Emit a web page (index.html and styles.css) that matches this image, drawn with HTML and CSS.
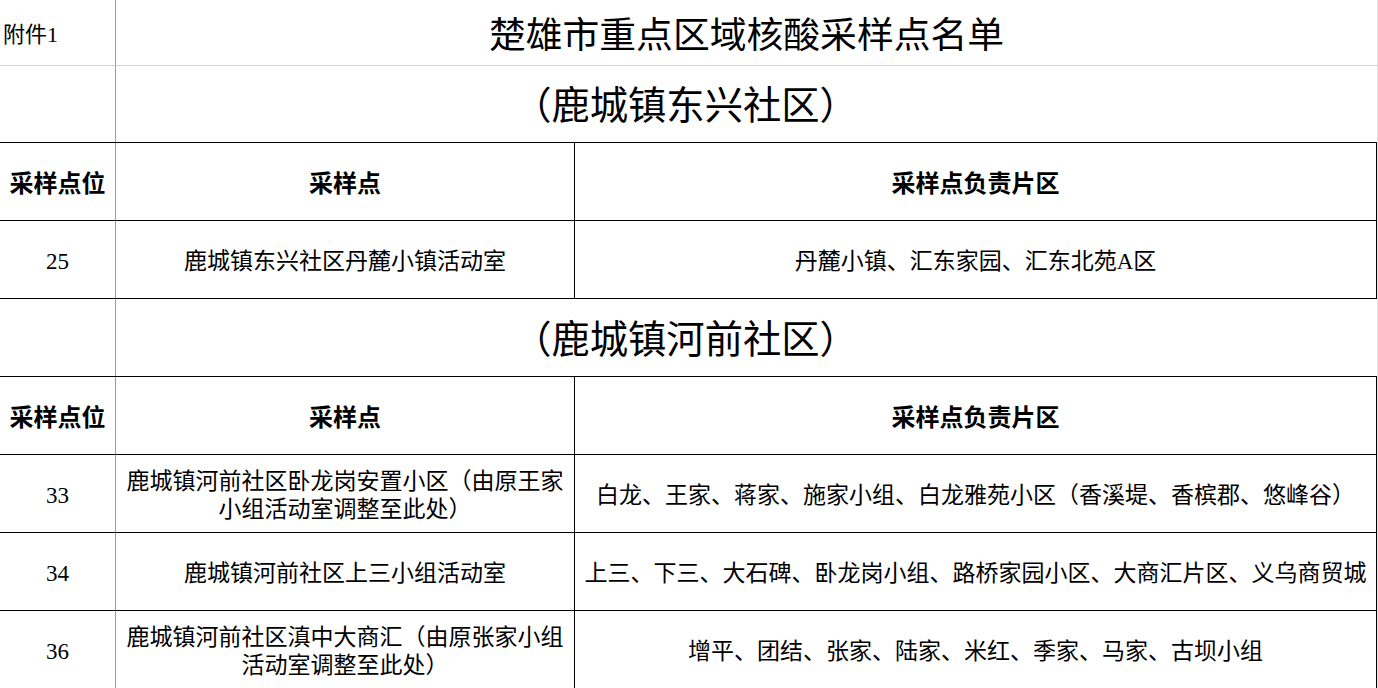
FILE: index.html
```html
<!DOCTYPE html>
<html lang="zh-CN">
<head>
<meta charset="utf-8">
<title>楚雄市重点区域核酸采样点名单</title>
<link rel="stylesheet" href="styles.css">
</head>
<body>
<div class="sheet">
  <div class="cell note">附件1</div>
  <div class="cell title">楚雄市重点区域核酸采样点名单</div>

  <div class="cell sub">（鹿城镇东兴社区）</div>

  <div class="cell c1 head">采样点位</div>
  <div class="cell c2 head">采样点</div>
  <div class="cell c3 head">采样点负责片区</div>

  <div class="cell c1 num">25</div>
  <div class="cell c2">鹿城镇东兴社区丹麓小镇活动室</div>
  <div class="cell c3">丹麓小镇、汇东家园、汇东北苑A区</div>

  <div class="cell sub">（鹿城镇河前社区）</div>

  <div class="cell c1 head">采样点位</div>
  <div class="cell c2 head">采样点</div>
  <div class="cell c3 head">采样点负责片区</div>

  <div class="cell c1 num">33</div>
  <div class="cell c2">鹿城镇河前社区卧龙岗安置小区（由原王家<br>小组活动室调整至此处）</div>
  <div class="cell c3">白龙、王家、蒋家、施家小组、白龙雅苑小区（香溪堤、香槟郡、悠峰谷）</div>

  <div class="cell c1 num">34</div>
  <div class="cell c2">鹿城镇河前社区上三小组活动室</div>
  <div class="cell c3">上三、下三、大石碑、卧龙岗小组、路桥家园小区、大商汇片区、义乌商贸城</div>

  <div class="cell c1 num">36</div>
  <div class="cell c2">鹿城镇河前社区滇中大商汇（由原张家小组<br>活动室调整至此处）</div>
  <div class="cell c3">增平、团结、张家、陆家、米红、季家、马家、古坝小组</div>
</div>
</body>
</html>
```
FILE: styles.css
```css
html, body {
  margin: 0;
  padding: 0;
  background: #ffffff;
}

body {
  font-family: "Liberation Serif", "Noto Sans CJK SC", serif;
  color: #000000;
  overflow: hidden;
}

.sheet {
  box-sizing: border-box;
  width: 1378px;
  border-right: 1px solid #e2e2e2;
  display: grid;
  grid-template-columns: 116px 459px 802px;
  grid-template-rows: 66px 77px repeat(7, 78px);
}

.cell {
  box-sizing: border-box;
  display: flex;
  align-items: center;
  justify-content: center;
  text-align: center;
  font-size: 23px;
  line-height: 28px;
  padding-top: 4px;
  white-space: nowrap;
}

.note {
  justify-content: flex-start;
  padding-left: 3px;
  font-size: 22px;
  border-right: 1px solid #9c9c9c;
  border-bottom: 1px solid #d2d2d2;
}

.title {
  grid-column: span 2;
  font-size: 36.8px;
  padding-top: 6px;
  border-bottom: 1px solid #d2d2d2;
}

.sub {
  grid-column: span 3;
  font-size: 38.3px;
  padding-right: 6px;
  border-bottom: 1px solid #000000;
  background: linear-gradient(to right, transparent 115px, #9c9c9c 115px, #9c9c9c 116px, transparent 116px);
}

.c1 {
  border-right: 1px solid #9c9c9c;
  border-bottom: 1px solid #000000;
}

.c2 {
  border-right: 1px solid #000000;
  border-bottom: 1px solid #000000;
}

.c3 {
  border-right: 1px solid #000000;
  border-bottom: 1px solid #000000;
}

.head {
  font-weight: bold;
  font-size: 24px;
}

.num {
  font-size: 23px;
}
```
